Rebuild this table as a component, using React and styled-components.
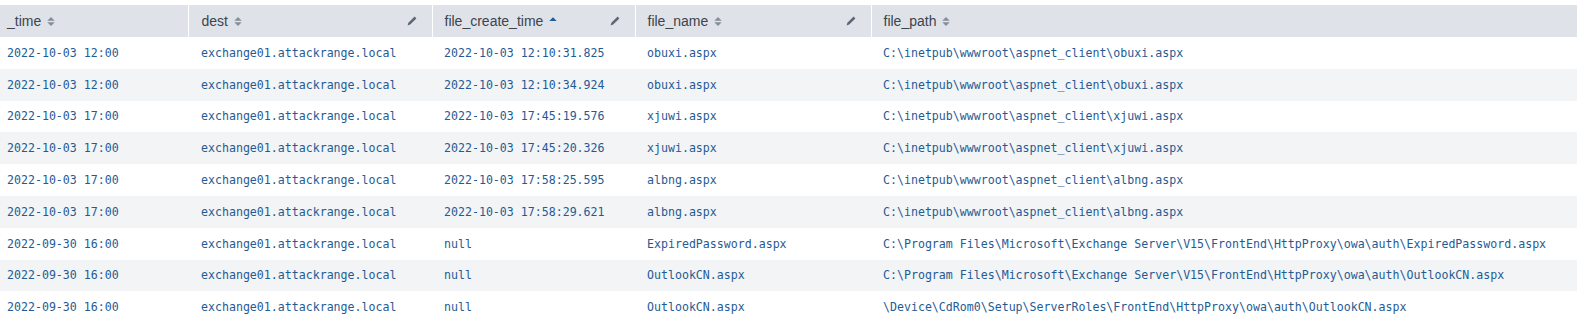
import React from "react";
import styled, { createGlobalStyle } from "styled-components";

const Global = createGlobalStyle`
  html, body { margin: 0; padding: 0; background: #ffffff; }
  body { padding-top: 5px; }
`;

const Table = styled.table`
  width: 1577px;
  border-collapse: collapse;
  table-layout: fixed;
`;

const HeadCell = styled.th`
  height: 32px;
  padding: 0 0 0 ${(p) => p.$pad}px;
  background: #dfe3e9;
  border-left: ${(p) => (p.$first ? "none" : "1px solid #ffffff")};
  text-align: left;
  font-family: "Liberation Sans", Arial, sans-serif;
  font-size: 14px;
  font-weight: 400;
  color: #3c444d;
  vertical-align: middle;
`;

const HeadInner = styled.div`
  display: flex;
  align-items: center;
  padding-right: 15px;
`;

const Label = styled.span`
  white-space: nowrap;
`;

const SortIcon = styled.svg`
  margin-left: 6px;
  flex: none;
`;

const EditIcon = styled.svg`
  margin-left: auto;
  flex: none;
`;

const Row = styled.tr`
  background: ${(p) => (p.$alt ? "#f2f4f5" : "#ffffff")};
`;

const Cell = styled.td`
  height: 31.8px;
  padding: 0 0 0 ${(p) => p.$pad}px;
  font-family: "DejaVu Sans Mono", "Liberation Mono", monospace;
  font-size: 11.6px;
  color: #1f5b94;
  white-space: nowrap;
  overflow: hidden;
  vertical-align: middle;
`;

const columns = [
  { key: "time", label: "_time", width: 188, pad: 7, sort: "both", edit: false },
  { key: "dest", label: "dest", width: 244, pad: 13, sort: "both", edit: true },
  { key: "fct", label: "file_create_time", width: 203, pad: 12, sort: "asc", edit: true },
  { key: "name", label: "file_name", width: 236, pad: 12, sort: "both", edit: true },
  { key: "path", label: "file_path", width: 706, pad: 12, sort: "both", edit: false },
];

const D = "exchange01.attackrange.local";
const rows = [
  ["2022-10-03 12:00", D, "2022-10-03 12:10:31.825", "obuxi.aspx", "C:\\inetpub\\wwwroot\\aspnet_client\\obuxi.aspx"],
  ["2022-10-03 12:00", D, "2022-10-03 12:10:34.924", "obuxi.aspx", "C:\\inetpub\\wwwroot\\aspnet_client\\obuxi.aspx"],
  ["2022-10-03 17:00", D, "2022-10-03 17:45:19.576", "xjuwi.aspx", "C:\\inetpub\\wwwroot\\aspnet_client\\xjuwi.aspx"],
  ["2022-10-03 17:00", D, "2022-10-03 17:45:20.326", "xjuwi.aspx", "C:\\inetpub\\wwwroot\\aspnet_client\\xjuwi.aspx"],
  ["2022-10-03 17:00", D, "2022-10-03 17:58:25.595", "albng.aspx", "C:\\inetpub\\wwwroot\\aspnet_client\\albng.aspx"],
  ["2022-10-03 17:00", D, "2022-10-03 17:58:29.621", "albng.aspx", "C:\\inetpub\\wwwroot\\aspnet_client\\albng.aspx"],
  ["2022-09-30 16:00", D, "null", "ExpiredPassword.aspx", "C:\\Program Files\\Microsoft\\Exchange Server\\V15\\FrontEnd\\HttpProxy\\owa\\auth\\ExpiredPassword.aspx"],
  ["2022-09-30 16:00", D, "null", "OutlookCN.aspx", "C:\\Program Files\\Microsoft\\Exchange Server\\V15\\FrontEnd\\HttpProxy\\owa\\auth\\OutlookCN.aspx"],
  ["2022-09-30 16:00", D, "null", "OutlookCN.aspx", "\\Device\\CdRom0\\Setup\\ServerRoles\\FrontEnd\\HttpProxy\\owa\\auth\\OutlookCN.aspx"],
];

function Sort({ mode }) {
  if (mode === "asc") {
    return (
      <SortIcon width="8" height="11" viewBox="0 0 8 11">
        <polygon points="0.3,5 4,1.2 7.7,5" fill="#1e5d96" />
      </SortIcon>
    );
  }
  return (
    <SortIcon width="8" height="11" viewBox="0 0 8 11">
      <polygon points="0.3,4.8 4,1 7.7,4.8" fill="#858e98" />
      <polygon points="0.3,6.2 4,10 7.7,6.2" fill="#858e98" />
    </SortIcon>
  );
}

function Pencil() {
  return (
    <EditIcon width="10" height="10" viewBox="0 0 10 10">
      <polygon points="7.6,0.6 9.4,2.4 3.2,8.6 0.6,9.4 1.4,6.8" fill="#5c6773" />
    </EditIcon>
  );
}

export default function App() {
  return (
    <>
      <Global />
      <Table>
        <colgroup>
          {columns.map((c) => (
            <col key={c.key} style={{ width: c.width }} />
          ))}
        </colgroup>
        <thead>
          <tr>
            {columns.map((c, i) => (
              <HeadCell key={c.key} $pad={c.pad} $first={i === 0}>
                <HeadInner>
                  <Label>{c.label}</Label>
                  <Sort mode={c.sort} />
                  {c.edit && <Pencil />}
                </HeadInner>
              </HeadCell>
            ))}
          </tr>
        </thead>
        <tbody>
          {rows.map((r, ri) => (
            <Row key={ri} $alt={ri % 2 === 1}>
              {r.map((v, ci) => (
                <Cell key={ci} $pad={columns[ci].pad}>
                  {v}
                </Cell>
              ))}
            </Row>
          ))}
        </tbody>
      </Table>
    </>
  );
}
